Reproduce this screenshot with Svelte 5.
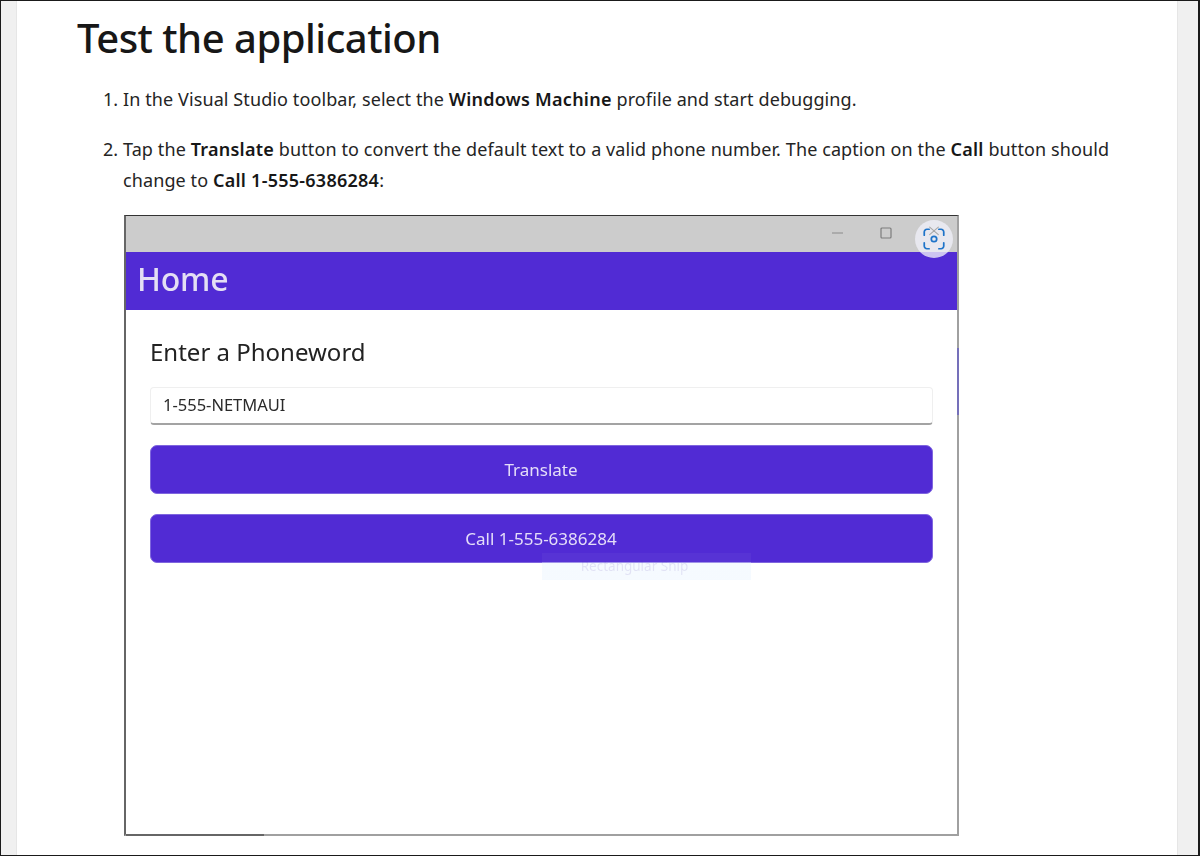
<script lang="ts">
  const stepOneLead = "In the Visual Studio toolbar, select the ";
</script>

<div class="viewport">
  <main class="page">
    <h2 class="title">Test the application</h2>
    <ol class="steps">
      <li>{stepOneLead}<strong>Windows Machine</strong> profile and start debugging.</li>
      <li>
        Tap the <strong>Translate</strong> button to convert the default text to a valid phone number. The caption on the <strong>Call</strong> button should change to <strong>Call 1-555-6386284</strong>:
        <div class="shot">
          <div class="titlebar">
            <svg class="ctl" width="14" height="14" viewBox="0 0 14 14"><path d="M1 7h11" stroke="#8a8a8a" stroke-width="1" fill="none" /></svg>
            <svg class="ctl" width="14" height="14" viewBox="0 0 14 14"><rect x="2" y="2" width="10" height="10" rx="1" stroke="#7c7c7c" stroke-width="1.2" fill="none" /></svg>
            <span class="ctl-spacer"></span>
          </div>
          <div class="navbar"><span class="nav-title">Home</span></div>
          <div class="content">
            <div class="label">Enter a Phoneword</div>
            <div class="entry">1-555-NETMAUI</div>
            <div class="btn">Translate</div>
            <div class="btn call">Call 1-555-6386284</div>
          </div>
          <div class="edge"></div>
          <div class="dark-run"></div>
          <div class="snip-tip"><span>Rectangular Snip</span></div>
          <div class="lens">
            <svg width="26" height="26" viewBox="0 0 24 24" fill="none" stroke="#1f74c9" stroke-width="1.6" stroke-linecap="round">
              <path d="M8 1l8 7M16 1L8 8" stroke="#a8a8a8" stroke-width="1" />
              <path d="M3 8.500V5.500A2.500 2.500 0 0 1 5.500 3H7.500" />
              <path d="M16.500 3h2A2.500 2.500 0 0 1 21 5.500v3" />
              <path d="M3 15.500v3A2.500 2.500 0 0 0 5.500 21H7.500" />
              <path d="M16.500 21h2a2.500 2.500 0 0 0 2.500-2.500v-3" />
              <circle cx="12" cy="12" r="2.500" />
            </svg>
          </div>
        </div>
      </li>
    </ol>
  </main>
</div>

<style>
  :global(body) {
    margin: 0;
    background: #fff;
  }
  .viewport {
    box-sizing: border-box;
    width: 1200px;
    height: 856px;
    overflow: hidden;
    border: 1px solid #1a1a1a;
    border-width: 1px 2px 1px 1px;
    padding: 0 20px 0 15px;
    background: #f0f0f0;
    font-family: "Noto Sans", "Open Sans", sans-serif;
    color: #242424;
  }
  .page {
    height: 100%;
    box-sizing: border-box;
    padding: 0 60px;
    background: #fff;
    border-left: 1px solid #e6e6e6;
    border-right: 1px solid #e6e6e6;
  }
  .title {
    margin: 0;
    padding-top: 10px;
    font-size: 40px;
    line-height: 54px;
    font-weight: 500;
    letter-spacing: -0.5px;
    color: #171717;
  }
  .steps {
    margin: 19px 0 0;
    padding: 0 0 0 46px;
    font-size: 18px;
    line-height: 31px;
    letter-spacing: 0.1px;
  }
  .steps li {
    margin-bottom: 19px;
  }
  strong {
    font-weight: 600;
    letter-spacing: 0.25px;
    color: #171717;
  }
  .shot {
    position: relative;
    box-sizing: border-box;
    width: 835px;
    height: 621px;
    margin: 19px 0 0 1px;
    border-style: solid;
    border-width: 1px 2px 2px 2px;
    border-color: #333 #a0a0a0 #a0a0a0 #666;
    letter-spacing: 0;
    background: #fff;
  }
  .titlebar {
    display: flex;
    align-items: center;
    justify-content: flex-end;
    gap: 34px;
    height: 36px;
    padding-bottom: 3px;
    box-sizing: border-box;
    background: #cccccc;
  }
  .ctl-spacer {
    width: 30px;
  }
  .navbar {
    display: flex;
    align-items: center;
    height: 58px;
    padding-left: 11px;
    padding-bottom: 6px;
    box-sizing: border-box;
    background: #512bd4;
  }
  .nav-title {
    font-size: 32px;
    font-weight: 500;
    letter-spacing: -0.2px;
    color: #e4dff4;
    filter: blur(0.4px);
  }
  .content {
    display: flex;
    flex-direction: column;
    padding: 25px 24px 0 24px;
    filter: blur(0.4px);
  }
  .label {
    font-size: 24px;
    line-height: 34px;
    color: #222;
  }
  .entry {
    display: flex;
    align-items: center;
    box-sizing: border-box;
    height: 38px;
    margin-top: 18px;
    padding: 0 0 2px 12px;
    border: 1px solid #efefef;
    border-bottom: 2px solid #a3a3a3;
    border-radius: 4px;
    font-size: 16.5px;
    color: #2a2a2a;
  }
  .btn {
    display: flex;
    align-items: center;
    justify-content: center;
    box-sizing: border-box;
    height: 49px;
    margin-top: 20px;
    padding-right: 1px;
    border: 1px solid #7f66de;
    border-radius: 7px;
    background: #512bd4;
    color: #e4ddf8;
    font-size: 17px;
  }
  .btn.call {
    margin-top: 20px;
  }
  .edge {
    position: absolute;
    right: -2px;
    top: 132px;
    width: 2px;
    height: 67px;
    background: #7570ba;
  }
  .dark-run {
    position: absolute;
    left: 0;
    bottom: -2px;
    width: 138px;
    height: 2px;
    background: #666;
  }
  .snip-tip {
    position: absolute;
    left: 416px;
    top: 337px;
    width: 209px;
    height: 27px;
    box-sizing: border-box;
    padding-right: 24px;
    display: flex;
    align-items: center;
    justify-content: center;
    background: linear-gradient(rgba(255, 255, 255, 0.04) 9px, rgba(225, 240, 255, 0.32) 9px);
    color: rgba(80, 60, 170, 0.12);
    font-size: 13.5px;
    filter: blur(0.4px);
  }
  .lens {
    position: absolute;
    right: 4px;
    top: 4px;
    width: 38px;
    height: 38px;
    display: flex;
    align-items: center;
    justify-content: center;
    border-radius: 50%;
    background: rgba(240, 240, 248, 0.78);
  }
</style>
